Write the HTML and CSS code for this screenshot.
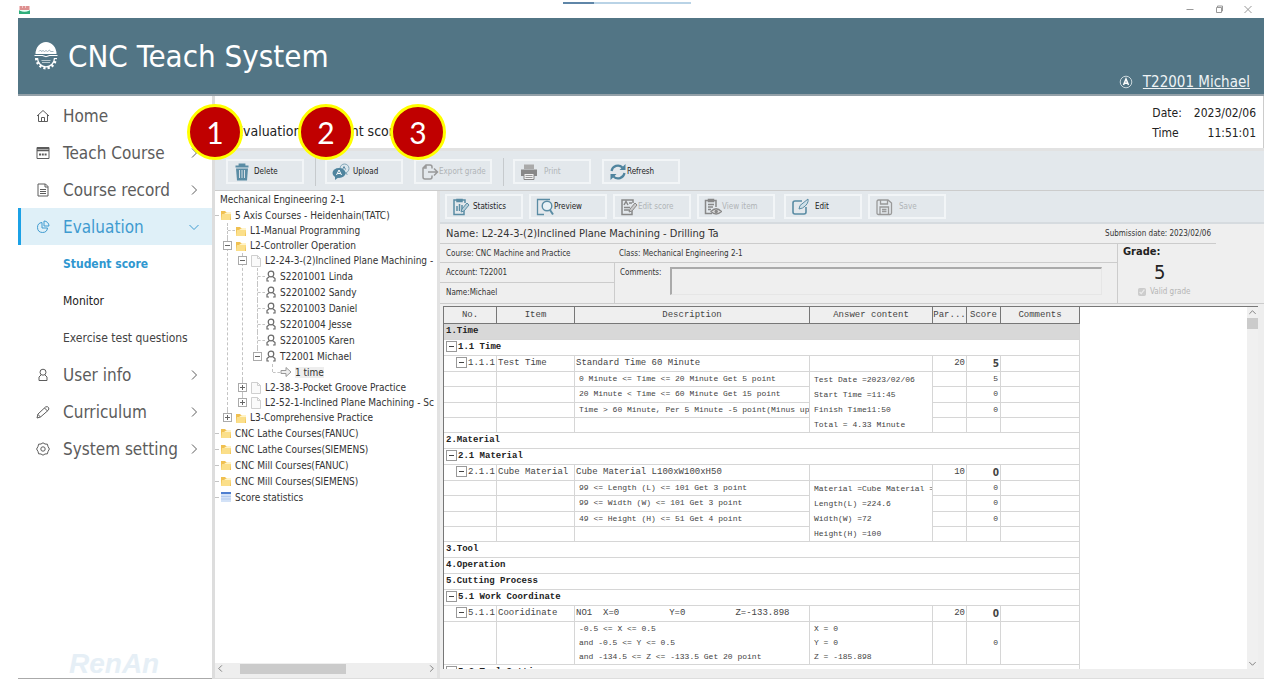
FILE: index.html
```html
<!DOCTYPE html>
<html lang="en">
	<head>
		<meta charset="UTF-8" />
		<meta name="viewport" content="width=device-width, initial-scale=1.0" />
		<title>CNC Teach System</title>
		<link rel="stylesheet" href="styles.css">
	</head>
	<body>
		<!-- Shared icons -->
		<svg class="sprite" aria-hidden="true">
			<symbol id="folder" viewBox="0 0 12 12">
				<path d="M1 2h4l1 1h5v8H1z" fill="#f0c050" />
				<path d="M2 5h9l-1 6H1z" fill="#fbdf8a" />
				<path d="M4 5l3-2h4v2z" fill="#fff3c8" />
			</symbol>
			<symbol id="doc" viewBox="0 0 12 12">
				<path d="M1.5.5h6l3 3v8h-9z" fill="#fafafa" stroke="#cfcfcf" />
				<path d="M7.500.5v3h3" fill="none" stroke="#cfcfcf" />
			</symbol>
			<symbol id="person" viewBox="0 0 12 12">
				<circle cx="6" cy="4" r="2.800" fill="none" stroke="#6a6a6a" stroke-width="1.200" />
				<path d="M4.500 6.500L2 8.500V11h2M7.500 6.500L10 8.500V11H8" fill="none" stroke="#6a6a6a" stroke-width="1.200" />
			</symbol>
			<symbol id="chevron" viewBox="0 0 10 10">
				<path d="M3 .5L7.500 5L3 9.500" fill="none" stroke="currentColor" />
			</symbol>
		</svg>

		<div class="window">
			<div class="titlebar">
				<svg class="app-icon" viewBox="0 0 11 9"><rect width="11" height="4" y="1" fill="#f3c6c6" /><path d="M1 2h2M4 2h2M7 2h3M1 4h9" stroke="#c85a5a" /><path d="M0 5q5 3 11 0v4H0z" fill="#2fae7b" /><path d="M0 5h11q-5 3-11 0" fill="#e8fff4" /></svg>
				<span class="grip"></span>
				<div class="window-buttons">
					<button type="button" aria-label="Minimize"><svg viewBox="0 0 10 10"><path d="M1.500 5.500h7" /></svg></button>
					<button type="button" aria-label="Restore"><svg viewBox="0 0 10 10"><path d="M2.500 3.500h5v5h-5zM3.500 3.500v-1.500h5v5h-1" /></svg></button>
					<button type="button" aria-label="Close"><svg viewBox="0 0 10 10"><path d="M1.500 2l7 7M8.500 2l-7 7" /></svg></button>
				</div>
			</div>

			<header class="header">
				<svg class="logo" viewBox="0 0 24 30">
					<path d="M1.500 13a10.500 12 0 0 1 21 0z" fill="#fff" />
					<path d="M5 10.500l1.500-1.500 1 1.500 1.500-1 1.500 1 1.500-1 1.500 1 2-1.500 1 1.500h3" fill="none" stroke="#8ba3af" stroke-width=".8" />
					<path d="M.5 14.500h8l3.500 1.200 3.500-1.200h8" fill="none" stroke="#fff" stroke-width="1.200" />
					<path d="M3.500 17a8.500 8.800 0 0 0 17 0" fill="none" stroke="#fff" stroke-width="1.300" />
					<path d="M2.200 17a9.800 10.200 0 0 0 19.600 0" fill="none" stroke="#fff" stroke-width="2.400" stroke-dasharray="2.200 2.100" />
					<path d="M7.500 19.500h9M8 21.500h8" stroke="#b9c9d0" stroke-width="1" />
				</svg>
				<h1>CNC Teach System</h1>
				<div class="user">
					<svg viewBox="0 0 14 14"><circle cx="7" cy="7" r="5.800" fill="none" stroke="#c9d6db" /><path d="M4.500 10L7 4l2.500 6M5.300 8.200h3.400" fill="none" stroke="#fff" stroke-width="1.500" /></svg>
					<a href="#">T22001 Michael</a>
				</div>
			</header>

			<div class="body">
				<nav class="nav">
					<a href="#" class="nav-item">
						<svg class="nav-icon" viewBox="0 0 14 14"><path d="M1 7l6-5.500L13 7M2.500 6v6.500h9V6M5.500 12V8.500h3V12" /></svg>
						Home
					</a>
					<a href="#" class="nav-item">
						<svg class="nav-icon" viewBox="0 0 14 14"><path d="M1 1.500h12v11H1z" /><path d="M1 2.500h12M1 4.500h12" stroke-width="1.400" /><path d="M3 8.500h8" stroke-width="1.800" stroke-dasharray="2 .8" /></svg>
						Teach Course
						<svg class="chevron"><use href="#chevron" /></svg>
					</a>
					<a href="#" class="nav-item">
						<svg class="nav-icon" viewBox="0 0 14 14"><path d="M2 1h7.500L12 3.500V13H2zM9 1v3h3M4 6.500h6M4 8.500h6M4 10.500h6" /></svg>
						Course record
						<svg class="chevron"><use href="#chevron" /></svg>
					</a>
					<a href="#" class="nav-item active">
						<svg class="nav-icon" viewBox="0 0 14 14"><path d="M6 2.500A5 5 0 1 0 11.500 8H6z" /><path d="M8 1v5h5A5 5 0 0 0 8 1z" /></svg>
						Evaluation
						<svg class="chevron down"><use href="#chevron" /></svg>
					</a>
					<a href="#" class="nav-sub current">Student score</a>
					<a href="#" class="nav-sub dark">Monitor</a>
					<a href="#" class="nav-sub">Exercise test questions</a>
					<a href="#" class="nav-item">
						<svg class="nav-icon" viewBox="0 0 14 14"><circle cx="7" cy="4.200" r="3" /><path d="M5 7L3 9v3.500h8V9L9 7" /></svg>
						User info
						<svg class="chevron"><use href="#chevron" /></svg>
					</a>
					<a href="#" class="nav-item">
						<svg class="nav-icon" viewBox="0 0 14 14"><path d="M1 13l1-4 7.500-7q2-1 3 .5t-.5 3L4.500 12zM8.500 3l3 3M2 9.500l2.500 2.500" /></svg>
						Curriculum
						<svg class="chevron"><use href="#chevron" /></svg>
					</a>
					<a href="#" class="nav-item">
						<svg class="nav-icon" viewBox="0 0 14 14"><path d="M7 .8l2 1.200 2.400.2.600 2.300L13.400 7 12 9.500l-.6 2.300L9 12l-2 1.200L5 12l-2.400-.2L2 9.500.6 7 2 4.500l.6-2.300L5 2z" /><circle cx="7" cy="7" r="2.200" /></svg>
						System setting
						<svg class="chevron"><use href="#chevron" /></svg>
					</a>
					<div class="brand">RenAn</div>
				</nav>

				<main class="main">
					<div class="page-head">
						<h2>Evaluation - Student score</h2>
						<dl class="clock">
							<dt>Date:</dt><dd>2023/02/06</dd>
							<dt>Time</dt><dd>11:51:01</dd>
						</dl>
						<span class="step step-1">1</span>
						<span class="step step-2">2</span>
						<span class="step step-3">3</span>
					</div>

					<div class="toolbar">
						<button type="button" class="tool">
							<svg viewBox="0 0 18 18"><path d="M3 5.500h12l-1 12H4z" fill="#5a8ca4" /><path d="M2.500 3.500h13M6.500 3V1.500h5V3" fill="none" stroke="#5a8ca4" stroke-width="1.800" /><path d="M6.500 7v8M9 7v8M11.500 7v8" stroke="#e3e8ec" stroke-width=".9" /></svg>
							<span>Delete</span>
						</button>
						<span class="sep"></span>
						<button type="button" class="tool">
							<svg viewBox="0 0 18 18"><circle cx="12.500" cy="5.500" r="4.500" fill="#dbe6ec" stroke="#7fa5b7" /><path d="M14 9l2 3-3-1z" fill="#7fa5b7" /><path d="M10.500 6.500L12 3.500l1.500 3" fill="none" stroke="#5a8ca4" /><ellipse cx="7" cy="10" rx="6.500" ry="5" fill="#4f849e" /><path d="M3 13v4l4-3z" fill="#4f849e" /><path d="M4.500 12L7 7l2.500 5M5.500 10.500h3" fill="none" stroke="#fff" /></svg>
							<span>Upload</span>
						</button>
						<button type="button" class="tool tight" disabled>
							<svg viewBox="0 0 18 18"><path d="M11 5.500V4q0-2-2-2H5L2 5v9q0 2 2 2h5q2 0 2-2v-1.500M5 2v3H2M7 9h9M13 5.500L16.500 9 13 12.500" fill="none" stroke="#999" stroke-width="1.500" /></svg>
							<span>Export grade</span>
						</button>
						<span class="sep"></span>
						<button type="button" class="tool spaced" disabled>
							<svg viewBox="0 0 18 18"><path d="M4 1.500h10V6H4z" fill="#aaa" /><path d="M1 6.500h16V13H1z" fill="#888" /><path d="M4 10.500h10v6H4z" fill="#f2f2f2" stroke="#888" /><path d="M5.500 12.500h7M5.500 14.500h7" stroke="#999" /></svg>
							<span>Print</span>
						</button>
						<button type="button" class="tool tight">
							<svg viewBox="0 0 18 18"><path d="M2.500 8a6.500 6.500 0 0 1 11-3.500M15.500 10a6.500 6.500 0 0 1-11 3.500" fill="none" stroke="#4f849e" stroke-width="2.200" /><path d="M16.500 1v6h-6zM1.500 17v-6h6z" fill="#4f849e" /></svg>
							<span>Refresh</span>
						</button>
					</div>

					<div class="split">
						<aside class="tree-pane">
							<div class="tree-scroll">
								<div class="tree-root">Mechanical Engineering 2-1</div>
								<ul class="tree">
									<li>
										<div class="node"><i class="dash"></i><svg><use href="#folder" /></svg><span>5 Axis Courses - Heidenhain(TATC)</span></div>
										<ul>
											<li><div class="node low"><i></i><svg><use href="#folder" /></svg><span>L1-Manual Programming</span></div></li>
											<li>
												<div class="node low"><i class="box"></i><svg><use href="#folder" /></svg><span>L2-Controller Operation</span></div>
												<ul>
													<li>
														<div class="node low"><i class="box"></i><svg><use href="#doc" /></svg><span>L2-24-3-(2)Inclined Plane Machining -</span></div>
														<ul>
															<li><div class="node"><i></i><svg><use href="#person" /></svg><span>S2201001 Linda</span></div></li>
															<li><div class="node"><i></i><svg><use href="#person" /></svg><span>S2201002 Sandy</span></div></li>
															<li><div class="node"><i></i><svg><use href="#person" /></svg><span>S2201003 Daniel</span></div></li>
															<li><div class="node"><i></i><svg><use href="#person" /></svg><span>S2201004 Jesse</span></div></li>
															<li><div class="node"><i></i><svg><use href="#person" /></svg><span>S2201005 Karen</span></div></li>
															<li>
																<div class="node"><i class="box"></i><svg><use href="#person" /></svg><span>T22001 Michael</span></div>
																<ul>
																	<li><div class="node"><i></i><svg viewBox="0 0 12 12"><path d="M1 4.500h5v-3L11 6l-5 4.500v-3H1z" fill="#eee" stroke="#999" /></svg><span class="selected">1 time</span></div></li>
																</ul>
															</li>
														</ul>
													</li>
													<li><div class="node low"><i class="box plus"></i><svg><use href="#doc" /></svg><span>L2-38-3-Pocket Groove Practice</span></div></li>
													<li><div class="node low"><i class="box plus"></i><svg><use href="#doc" /></svg><span>L2-52-1-Inclined Plane Machining - Sc</span></div></li>
												</ul>
											</li>
											<li><div class="node low"><i class="box plus"></i><svg><use href="#folder" /></svg><span>L3-Comprehensive Practice</span></div></li>
										</ul>
									</li>
									<li><div class="node"><i class="dash"></i><svg><use href="#folder" /></svg><span>CNC Lathe Courses(FANUC)</span></div></li>
									<li><div class="node"><i class="dash"></i><svg><use href="#folder" /></svg><span>CNC Lathe Courses(SIEMENS)</span></div></li>
									<li><div class="node"><i class="dash"></i><svg><use href="#folder" /></svg><span>CNC Mill Courses(FANUC)</span></div></li>
									<li><div class="node"><i class="dash"></i><svg><use href="#folder" /></svg><span>CNC Mill Courses(SIEMENS)</span></div></li>
									<li><div class="node"><i class="dash"></i><svg viewBox="0 0 12 12"><path d="M1 1h10v10H1z" fill="#d3e2f7" /><path d="M1 1h10v2H1z" fill="#4f7fd0" /><path d="M1 5.500h10M1 8h10" stroke="#b4cbee" /></svg><span>Score statistics</span></div></li>
								</ul>
							</div>
							<div class="hscroll">
								<svg class="arrow left" viewBox="0 0 10 10"><use href="#chevron" /></svg>
								<div class="track"><div class="thumb"></div></div>
								<svg class="arrow" viewBox="0 0 10 10"><use href="#chevron" /></svg>
							</div>
						</aside>

						<section class="detail">
							<div class="toolbar small">
								<button type="button" class="tool">
									<svg viewBox="0 0 18 18"><path d="M12 13v3.500H2V2h11v3M5 1.500h5v2H5zM5 13V8M7.500 13V6M10 13V7" fill="none" stroke="#5a8ca4" stroke-width="1.500" /><path d="M9 14l1-3 5-6 2 2-5 6z" fill="#b9d0db" stroke="#5a8ca4" /></svg>
									<span>Statistics</span>
								</button>
								<button type="button" class="tool tight">
									<svg viewBox="0 0 18 18"><path d="M8 16.500H1.500v-15H14" fill="none" stroke="#5a8ca4" stroke-width="1.300" /><circle cx="11" cy="8" r="4.800" fill="#e9f2f6" stroke="#5a8ca4" stroke-width="1.400" /><path d="M14 12l3 4.500" stroke="#5a8ca4" stroke-width="2" /></svg>
									<span>Preview</span>
								</button>
								<button type="button" class="tool tight" disabled>
									<svg viewBox="0 0 18 18"><path d="M12 13v3.500H2V2h11v3M4 7l2-3.500L8 7M9 5h3M4 9.500h6M4 12h5" fill="none" stroke="#888" stroke-width="1.500" /><path d="M9 14l1-3 5-6 2 2-5 6z" fill="#ccc" stroke="#888" /></svg>
									<span>Edit score</span>
								</button>
								<button type="button" class="tool tight" disabled>
									<svg viewBox="0 0 18 18"><path d="M8 15.500H1.500v-13H12V9M4.500 1.500h5v2h-5zM4 6.500h6M4 9h5M4 11.500h3" fill="none" stroke="#888" stroke-width="1.500" /><path d="M7 13.500q5-5.500 10.500 0-5.500 5-10.500 0z" fill="#ddd" stroke="#888" stroke-width="1.300" /><circle cx="12.200" cy="13.500" r="1.700" fill="#888" /></svg>
									<span>View item</span>
								</button>
								<button type="button" class="tool spaced edit">
									<svg viewBox="0 0 18 18"><path d="M11 3H4Q2 3 2 5v9q0 2 2 2h9q2 0 2-2V9" fill="none" stroke="#5a8ca4" stroke-width="1.600" /><path d="M8 11l1-3.500L17 1q1 5-5.500 9z" fill="#cfe0e8" stroke="#5a8ca4" /></svg>
									<span>Edit</span>
								</button>
								<button type="button" class="tool spaced" disabled>
									<svg viewBox="0 0 18 18"><path d="M2 3.500Q2 2 3.500 2H13l3.500 3v10q0 1.500-1.500 1.500H3.500Q2 16.500 2 15zM5.500 2v4h7V2M5 16.500V9h8.500v7.500M7 11.500h4.500M7 13.500h4.500" fill="none" stroke="#999" stroke-width="1.300" /></svg>
									<span>Save</span>
								</button>
							</div>

							<div class="info">
								<div class="info-title">
									<span>Name: L2-24-3-(2)Inclined Plane Machining - Drilling Ta</span>
									<small>Submission date: 2023/02/06</small>
								</div>
								<div class="info-body">
									<div class="info-left">
										<div class="info-line">
											<span>Course: CNC Machine and Practice</span>
											<span>Class: Mechanical Engineering 2-1</span>
										</div>
										<div class="info-people">
											<div class="info-who">
												<span>Account: T22001</span>
												<span>Name:Michael</span>
											</div>
											<label for="comments">Comments:</label>
											<textarea id="comments" readonly></textarea>
										</div>
									</div>
									<div class="grade">
										<strong>Grade:</strong>
										<output>5</output>
										<label><input type="checkbox" checked disabled /> Valid grade</label>
									</div>
								</div>
							</div>

							<div class="grid-pane">
								<div class="grid-view">
									<table class="scores">
										<colgroup>
											<col class="c-no"><col class="c-item"><col class="c-desc"><col class="c-answer"><col class="c-par"><col class="c-score"><col class="c-comments">
										</colgroup>
										<thead>
											<tr><th>No.</th><th>Item</th><th>Description</th><th>Answer content</th><th>Par...</th><th>Score</th><th>Comments</th></tr>
										</thead>
										<tbody>
											<tr class="section picked"><td colspan="7">1.Time</td></tr>
											<tr class="section"><td colspan="7"><button type="button" aria-label="Collapse 1.1"></button>1.1 Time</td></tr>
											<tr class="item"><td><button type="button" aria-label="Collapse 1.1.1"></button>1.1.1</td><td>Test Time</td><td>Standard Time 60 Minute</td><td></td><td>20</td><td>5</td><td></td></tr>
											<tr class="rule"><td></td><td></td><td>0 Minute &lt;= Time &lt;= 20 Minute Get 5 point</td><td rowspan="4">Test Date =2023/02/06<br>Start Time =11:45<br>Finish Time11:50<br>Total = 4.33 Minute</td><td></td><td>5</td><td></td></tr>
											<tr class="rule"><td></td><td></td><td>20 Minute &lt; Time &lt;= 60 Minute Get 15 point</td><td></td><td>0</td><td></td></tr>
											<tr class="rule"><td></td><td></td><td>Time &gt; 60 Minute, Per 5 Minute -5 point(Minus up to</td><td></td><td>0</td><td></td></tr>
											<tr class="rule"><td></td><td></td><td></td><td></td><td></td><td></td></tr>
											<tr class="section"><td colspan="7">2.Material</td></tr>
											<tr class="section"><td colspan="7"><button type="button" aria-label="Collapse 2.1"></button>2.1 Material</td></tr>
											<tr class="item"><td><button type="button" aria-label="Collapse 2.1.1"></button>2.1.1</td><td>Cube Material</td><td>Cube Material L100xW100xH50</td><td></td><td>10</td><td>0</td><td></td></tr>
											<tr class="rule"><td></td><td></td><td>99 &lt;= Length (L) &lt;= 101 Get 3 point</td><td rowspan="4">Material =Cube Material =<br>Length(L) =224.6<br>Width(W) =72<br>Height(H) =100</td><td></td><td>0</td><td></td></tr>
											<tr class="rule"><td></td><td></td><td>99 &lt;= Width (W) &lt;= 101 Get 3 point</td><td></td><td>0</td><td></td></tr>
											<tr class="rule"><td></td><td></td><td>49 &lt;= Height (H) &lt;= 51 Get 4 point</td><td></td><td>0</td><td></td></tr>
											<tr class="rule"><td></td><td></td><td></td><td></td><td></td><td></td></tr>
											<tr class="section"><td colspan="7">3.Tool</td></tr>
											<tr class="section"><td colspan="7">4.Operation</td></tr>
											<tr class="section"><td colspan="7">5.Cutting Process</td></tr>
											<tr class="section"><td colspan="7"><button type="button" aria-label="Collapse 5.1"></button>5.1 Work Coordinate</td></tr>
											<tr class="item"><td><button type="button" aria-label="Collapse 5.1.1"></button>5.1.1</td><td>Cooridinate</td><td><span class="axes"><span>NO1&nbsp; X=0</span><span>Y=0</span><span>Z=-133.898</span></span></td><td></td><td>20</td><td>0</td><td></td></tr>
											<tr class="rule"><td></td><td></td><td>-0.5 &lt;= X &lt;= 0.5<br>and -0.5 &lt;= Y &lt;= 0.5<br>and -134.5 &lt;= Z &lt;= -133.5 Get 20 point</td><td>X = 0<br>Y = 0<br>Z = -185.898</td><td></td><td>0</td><td></td></tr>
											<tr class="section"><td colspan="7"><button type="button" aria-label="Collapse 5.2"></button>5.2 Tool Setting</td></tr>
										</tbody>
									</table>
								</div>
								<div class="vscroll">
									<svg class="arrow up" viewBox="0 0 10 10"><use href="#chevron" /></svg>
									<div class="thumb"></div>
									<svg class="arrow bottom" viewBox="0 0 10 10"><use href="#chevron" /></svg>
								</div>
							</div>
						</section>
					</div>
				</main>
			</div>
		</div>
	</body>
</html>
```

FILE: styles.css
```css
* {
	box-sizing: border-box;
}
body {
	margin: 0;
	height: 100vh;
	background-color: #fff;
	color: #333;
	font-family: "DejaVu Sans Condensed", "Noto Sans", sans-serif;
	font-size: 10px;
}
button,
textarea {
	font-family: inherit;
}
.sprite {
	display: none;
}
.window {
	display: flex;
	flex-direction: column;
	height: 100%;
	padding: 0 16px 9px 18px;
}

/* Title bar */
.titlebar {
	display: flex;
	justify-content: space-between;
	align-items: center;
	height: 18px;
	flex: none;
}
.app-icon {
	width: 11px;
	height: 9px;
	margin-left: 1px;
}
.grip {
	align-self: flex-start;
	width: 128px;
	height: 2px;
	margin: 2px 0 0 38px;
	background: linear-gradient(to right, #5f86a8 24%, #b9d3e6 24%);
}
.window-buttons {
	display: flex;
	gap: 19px;
	padding-right: 11px;
}
.window-buttons button {
	width: 10px;
	height: 10px;
	padding: 0;
	border: 0;
	background: none;
}
.window-buttons svg {
	display: block;
	fill: none;
	stroke: #999;
}

/* Header */
.header {
	display: flex;
	align-items: center;
	flex: none;
	height: 78px;
	padding: 0 14px 0 16px;
	border-bottom: 2px solid #93a0a8;
	background-color: #527585;
	color: #fff;
}
.logo {
	width: 24px;
	height: 30px;
	margin-right: 10px;
}
.header h1 {
	margin: 0;
	font-size: 31px;
	font-weight: normal;
}
.user {
	display: flex;
	align-items: center;
	align-self: flex-end;
	gap: 10px;
	margin-left: auto;
	padding-bottom: 3px;
	font-size: 15px;
}
.user svg {
	width: 14px;
	height: 14px;
}
.user a {
	color: #eef3f5;
}

.body {
	display: flex;
	flex: 1;
	min-height: 0;
}

/* Navigation */
.nav {
	display: flex;
	flex-direction: column;
	flex: none;
	width: 194px;
	padding-top: 1px;
	border-bottom: 1px solid #aaa;
}
.nav-item,
.nav-sub {
	display: flex;
	align-items: center;
	flex: none;
	height: 37px;
	color: #5c5c5c;
	text-decoration: none;
}
.nav-item {
	padding: 0 13px 0 18px;
	font-size: 17px;
}
.nav-item.active {
	padding-left: 15px;
	border-left: 3px solid #1ba1e6;
	background-color: #dff0f8;
	color: #3f9bd0;
}
.nav-icon {
	width: 14px;
	height: 14px;
	margin-right: 13px;
	fill: none;
	stroke: currentColor;
}
.chevron {
	width: 10px;
	height: 10px;
	margin-left: auto;
}
.chevron.down {
	transform: rotate(90deg);
}
.nav-sub {
	padding-left: 45px;
	font-size: 12px;
	color: #444;
}
.nav-sub.dark {
	color: #222;
}
.nav-sub.current {
	color: #2f97d0;
	font-weight: bold;
}
.brand {
	margin: auto 0 0 51px;
	color: #e6eff6;
	font-family: "Liberation Sans", sans-serif;
	font-size: 28px;
	font-style: italic;
	font-weight: bold;
	line-height: 28px;
}

/* Main column */
.main {
	display: flex;
	flex-direction: column;
	flex: 1;
	min-width: 0;
	border-left: 3px solid #ddd;
	border-bottom: 1px solid #ddd;
	background-color: #eee;
}
.page-head {
	position: relative;
	display: flex;
	justify-content: space-between;
	flex: none;
	height: 52px;
	padding: 0 7px 0 20px;
	border-right: 1px solid #ccc;
	background-color: #fff;
}
.page-head h2 {
	margin: 24px 0 0;
	color: #222;
	font-size: 14px;
	font-weight: normal;
	line-height: 22px;
}
.clock {
	display: grid;
	grid-template-columns: auto auto;
	column-gap: 12px;
	align-content: start;
	margin: 7px 0 0;
	color: #222;
	font-size: 12px;
	line-height: 20px;
}
.clock dd {
	margin: 0;
	text-align: right;
}

/* Step markers over the toolbar */
.step {
	position: absolute;
	top: 8px;
	width: 56px;
	height: 56px;
	border: 3px solid #ff0;
	border-radius: 50%;
	background-color: #c00000;
	color: #fff;
	font-family: Lato, sans-serif;
	font-size: 30px;
	line-height: 50px;
	text-align: center;
}
.step-1 {
	left: -28px;
}
.step-2 {
	left: 83px;
}
.step-3 {
	left: 175px;
}

/* Toolbars */
.toolbar {
	display: flex;
	align-items: center;
	flex: none;
	gap: 11px;
	height: 43px;
	padding: 2px 11px 0;
	border-top: 3px solid #e2e2e2;
	border-bottom: 1px solid #ccc;
	background-color: #e3e8ec;
}
.toolbar.small {
	gap: 6px;
	height: 33px;
	padding: 0 5px;
	border-top: 0;
	border-bottom: 2px solid #d6dbdf;
}
.tool {
	display: flex;
	align-items: center;
	gap: 3px;
	width: 78px;
	height: 25px;
	padding: 0 0 0 5px;
	border: 2px solid #f2f5f7;
	background: none;
	color: #222;
	font-size: 8px;
	white-space: nowrap;
}
.tool.tight {
	gap: 0;
}
.tool.spaced {
	gap: 6px;
}
.tool.edit {
	margin-left: 3px;
}
.tool:disabled {
	color: #b0b4b7;
}
.tool svg {
	flex: none;
	width: 18px;
	height: 18px;
}
.sep {
	width: 1px;
	height: 28px;
	margin-right: -2px;
	background-color: #c6cacd;
}

.split {
	display: flex;
	flex: 1;
	min-height: 0;
}

/* Course tree */
.tree-pane {
	display: flex;
	flex-direction: column;
	flex: none;
	width: 225px;
	padding-bottom: 4px;
	border-right: 3px solid #e2e2e2;
}
.tree-scroll {
	flex: 1;
	min-height: 0;
	overflow: hidden;
	background-color: #fff;
	white-space: nowrap;
}
.tree-root {
	height: 16px;
	padding-left: 5px;
	line-height: 17px;
}
.tree,
.tree ul {
	margin: 0;
	padding: 0;
	list-style: none;
}
.tree ul {
	padding-left: 15px;
}
.tree > li > ul {
	padding-left: 5px;
}
.tree ul li {
	position: relative;
}
.tree ul li::before {
	content: "";
	position: absolute;
	top: 0;
	bottom: 0;
	left: 7px;
	border-left: 1px dashed #c4c4c4;
}
.tree ul li:last-child::before {
	bottom: auto;
	height: 8px;
}
.node {
	display: flex;
	align-items: center;
	height: 16px;
}
.node.low {
	height: 15px;
}
.node svg {
	flex: none;
	width: 12px;
	height: 12px;
	margin-right: 3px;
}
.node i {
	flex: none;
	width: 7px;
	height: 1px;
	margin-left: 8px;
	border-top: 1px dashed #c4c4c4;
}
.node i.dash {
	width: 4px;
	margin: 0 1px 0 0;
}
.node i.box {
	position: relative;
	width: 9px;
	height: 9px;
	margin: 0 3px;
	border: 1px solid #aaa;
	background: linear-gradient(#666, #666) center / 5px 1px no-repeat #fff;
}
.node i.plus {
	background: linear-gradient(#666, #666) center / 5px 1px no-repeat, linear-gradient(#666, #666) center / 1px 5px no-repeat #fff;
}
.selected {
	background-color: #eee;
}

/* Scrollbars */
.hscroll {
	display: flex;
	align-items: center;
	flex: none;
	height: 11px;
}
.hscroll .track {
	flex: 1;
	height: 10px;
	padding-left: 14px;
}
.hscroll .thumb {
	width: 57%;
	height: 10px;
	background-color: #cbcbcb;
}
.arrow {
	width: 7px;
	height: 7px;
	margin: 0 2px;
	color: #555;
}
.arrow.left {
	transform: rotate(180deg);
}
.arrow.up {
	transform: rotate(-90deg);
}
.arrow.bottom {
	margin-top: auto;
	transform: rotate(90deg);
}
.vscroll {
	display: flex;
	flex-direction: column;
	gap: 2px;
	width: 11px;
	padding: 2px 0;
	background-color: #f0f0f0;
}
.vscroll .thumb {
	height: 11px;
	background-color: #cbcbcb;
}

/* Submission details */
.detail {
	display: flex;
	flex-direction: column;
	flex: 1;
	min-width: 0;
}
.info {
	flex: none;
	border-bottom: 1px solid #ccc;
	background-color: #efefef;
	font-size: 8px;
}
.info-title {
	display: flex;
	justify-content: space-between;
	align-items: center;
	height: 20px;
	margin-right: 48px;
	padding: 0 5px 0 6px;
	border-bottom: 1px solid #ccc;
	font-size: 11px;
}
.info-title small {
	font-size: 8px;
}
.info-body {
	display: flex;
}
.info-left {
	flex: 1;
}
.info-line {
	display: grid;
	grid-template-columns: 173px 1fr;
	align-items: center;
	height: 19px;
	padding-left: 6px;
	border-bottom: 1px solid #ccc;
}
.info-people {
	display: flex;
}
.info-who {
	width: 175px;
	border-right: 1px solid #ccc;
}
.info-who span {
	display: block;
	height: 20px;
	padding-left: 6px;
	line-height: 20px;
}
.info-who span:first-child {
	border-bottom: 1px solid #ccc;
}
.info-people label {
	width: 55px;
	padding-left: 5px;
	line-height: 20px;
}
.info-people textarea {
	flex: 1;
	height: 28px;
	margin: 4px 15px 0 0;
	border: 1px solid #e6e6e6;
	border-top: 2px solid #aaa;
	border-left: 2px solid #aaa;
	background: none;
	resize: none;
}
.grade {
	display: flex;
	flex-direction: column;
	width: 147px;
	padding-left: 5px;
	border-left: 1px solid #ccc;
}
.grade strong {
	color: #222;
	font-size: 11px;
	line-height: 16px;
}
.grade output {
	padding-left: 31px;
	color: #222;
	font-size: 20px;
	line-height: 24px;
}
.grade label {
	display: flex;
	align-items: center;
	gap: 4px;
	padding-left: 15px;
	color: #b5b5b5;
	line-height: 16px;
}
.grade input {
	width: 8px;
	height: 8px;
	margin: 0;
}

/* Score grid */
.grid-pane {
	display: flex;
	flex: 1;
	min-height: 0;
	margin: 2px 6px 9px 3px;
	border-top: 1px solid #777;
	border-left: 1px solid #777;
	background-color: #fff;
}
.grid-view {
	flex: 1;
	min-width: 0;
	overflow: hidden;
}
.scores {
	width: 636px;
	border-collapse: separate;
	border-spacing: 0;
	table-layout: fixed;
	color: #444;
	font-family: "Liberation Mono", monospace;
	font-size: 9px;
	white-space: nowrap;
}
.c-no {
	width: 53px;
}
.c-item {
	width: 78px;
}
.c-desc {
	width: 235px;
}
.c-answer {
	width: 123px;
}
.c-par,
.c-score {
	width: 34px;
}
.c-comments {
	width: 79px;
}
.scores th {
	height: 17px;
	padding: 0;
	border-right: 1px solid #777;
	border-bottom: 1px solid #777;
	background-color: #efefef;
	font-weight: normal;
}
.scores td {
	height: 16px;
	padding: 0 2px;
	overflow: hidden;
	border-right: 1px solid #d6d6d6;
	border-bottom: 1px solid #d6d6d6;
	line-height: 15px;
}
.section td {
	color: #222;
	font-weight: bold;
}
.picked td {
	background-color: #d8d8d8;
}
.scores button {
	width: 11px;
	height: 11px;
	margin: 0 1px 0 0;
	padding: 0;
	border: 1px solid #999;
	background: linear-gradient(#444, #444) center / 5px 1px no-repeat #fff;
	vertical-align: middle;
}
.scores .item td {
	padding: 0 1px;
}
.item td:first-child,
.item td:nth-child(5),
.item td:nth-child(6) {
	text-align: right;
}
.item td:nth-child(6) {
	font-family: "DejaVu Sans Condensed", sans-serif;
	font-size: 10px;
	font-weight: bold;
}
.axes {
	display: flex;
	gap: 50px;
}
.scores .rule td {
	height: 15px;
	padding: 0 0 0 4px;
	font-size: 8px;
	line-height: 14px;
}
.scores .rule td[rowspan] {
	line-height: 15px;
}
.scores .rule td:nth-last-child(2) {
	padding-right: 2px;
	text-align: right;
}
```
